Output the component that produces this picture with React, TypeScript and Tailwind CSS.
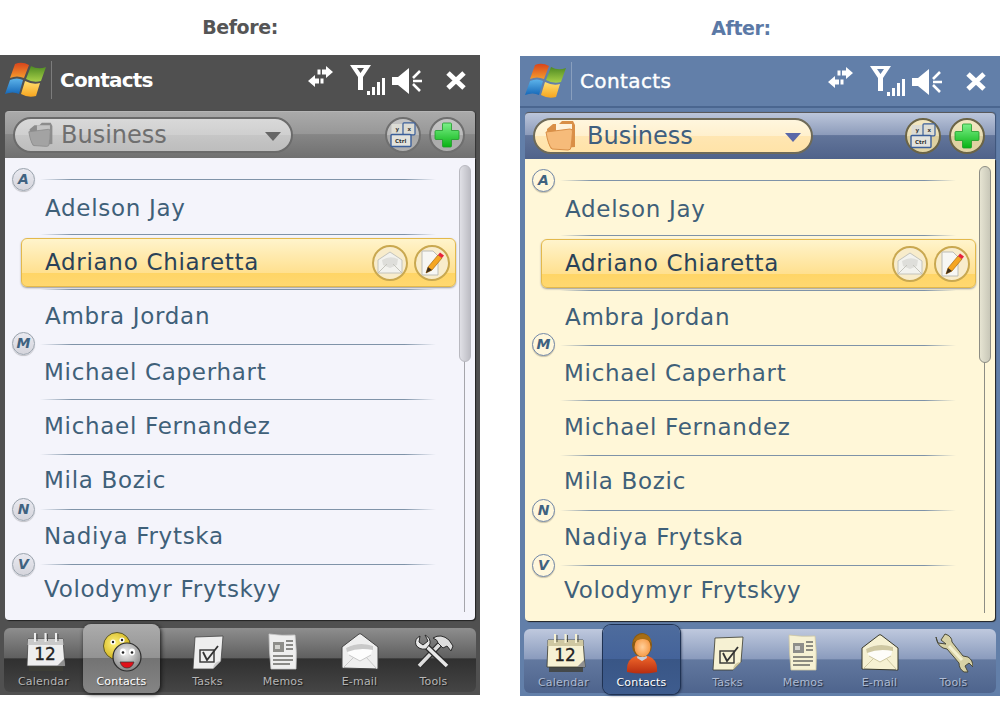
import type { ReactNode } from "react";

type Theme = {
  id: string;
  heading: string;
  frame: string;
  headerRule: string;
  titleClass: string;
  toolbar: string;
  pill: string;
  pillText: string;
  caret: string;
  roundButton: string;
  list: string;
  badge: string;
  thumb: string;
  track: string;
  tabBar: string;
  activeTab: string;
  tabText: string;
  folderWidth: number;
  folder: [string, string, string];
  paper: string;
  paperShade: string;
  ink: string;
};

const beforeTheme: Theme = {
  id: "before",
  heading: "text-[#555555]",
  frame: "bg-[#505050]",
  headerRule: "border-[#505050]",
  titleClass: "font-bold tracking-[-0.8px]",
  toolbar:
    "border-t border-[#b5b5b5] shadow-[1px_0_1px_#333] bg-[linear-gradient(180deg,#aaaaaa_0%,#979797_48%,#868686_49%,#707070_100%)]",
  pill: "border-[#6b6b6b] pl-[13px] bg-[linear-gradient(180deg,#d9d9d9_0%,#cfcfcf_50%,#c6c6c6_51%,#bdbdbd_100%)]",
  pillText: "ml-[7px] text-[#6f6f6f]",
  caret: "#666666",
  roundButton:
    "border-[#6f6f6f] bg-[linear-gradient(180deg,#c4c4c4_0%,#bcbcbc_50%,#a9a9a9_51%,#b0b0b0_100%)]",
  list: "bg-[#f4f4fb]",
  badge: "border-[#9aa3ad] bg-[linear-gradient(180deg,#e9e9f0,#d5d5dc)]",
  thumb: "border-[#b9b9c0] bg-[linear-gradient(90deg,#e0e0e6,#bdbdc4)]",
  track: "bg-[#a5a5ab]",
  tabBar:
    "bg-[linear-gradient(180deg,#8e8e8e_0%,#5f5f5f_47%,#303030_48%,#454545_100%)]",
  activeTab:
    "bg-[linear-gradient(180deg,#acacac_0%,#939393_49%,#737373_50%,#858585_100%)] shadow-[1px_1px_4px_#111]",
  tabText: "text-[#b5b5b5]",
  folderWidth: 26,
  folder: ["#8c8c8c", "#c4c4c4", "#a3a3a3"],
  paper: "#eeeeee",
  paperShade: "#c9c9c9",
  ink: "#444444",
};

const afterTheme: Theme = {
  id: "after",
  heading: "text-[#5b79a6]",
  frame: "bg-[#627fa9]",
  headerRule: "border-[#4a6690]",
  titleClass: "font-normal tracking-[0.4px] [-webkit-text-stroke:0.4px_white]",
  toolbar:
    "border-t border-[#59595b] shadow-[1px_0_1px_#3d5478] bg-[linear-gradient(180deg,#bcc6db_0%,#8c9bba_48%,#62759a_49%,#4f628a_100%)]",
  pill: "border-[#6e6a58] pl-[10px] bg-[linear-gradient(180deg,#fff6de_0%,#fff0cd_50%,#ffe6b2_51%,#ffe3a8_100%)]",
  pillText: "ml-[10px] text-[#3f5f7f]",
  caret: "#5a68a8",
  roundButton:
    "border-[#6b6446] bg-[linear-gradient(180deg,#f4e8c2_0%,#eadfb6_50%,#dccf9f_51%,#e2d5a6_100%)]",
  list: "bg-[#fff7d8]",
  badge: "border-[#7288a8] bg-[#fff7dc]",
  thumb: "border-[#8d8d84] bg-[linear-gradient(90deg,#e6e4d2,#c8c7b8)]",
  track: "bg-[#8d8d84]",
  tabBar:
    "bg-[linear-gradient(180deg,#bfc9de_0%,#8a9bbd_47%,#62789f_48%,#4e648d_100%)]",
  activeTab:
    "ring-1 ring-[#1f3253] bg-[linear-gradient(180deg,#4e6c9d_0%,#44639a_49%,#395686_50%,#3e5c8e_100%)] shadow-[1px_1px_3px_#1a2740]",
  tabText: "text-[#aebbd3]",
  folderWidth: 32,
  folder: ["#d98f47", "#fff3dc", "#f6bb7a"],
  paper: "#f6f1d3",
  paperShade: "#cfc8a2",
  ink: "#3a3a2c",
};

const contacts = [
  { name: "Adelson Jay", nudge: "pl-[40px] pt-[2px]" },
  { name: "Adriano Chiaretta", selected: true },
  { name: "Ambra Jordan", nudge: "pl-[40px] pb-[2px]", badge: "M", badgeClass: "-bottom-[10px]" },
  { name: "Michael Caperhart", nudge: "pl-[39px]" },
  { name: "Michael Fernandez", nudge: "pl-[39px] pb-[2px]" },
  { name: "Mila Bozic", nudge: "pl-[39px] pb-[3px]", badge: "N", badgeClass: "-bottom-[11px]" },
  { name: "Nadiya Frytska", nudge: "pl-[39px] pb-[2px]", badge: "V", badgeClass: "-bottom-[11px]" },
  { name: "Volodymyr Frytskyy", nudge: "pl-[39px] pb-[2px]", last: true },
];

function WindowsFlag({ id }: { id: string }) {
  return (
    <svg width="42" height="38" viewBox="0 0 42 38" className="shrink-0">
      <defs>
        <linearGradient id={`${id}-r`} x1="0" y1="0" x2="0" y2="1">
          <stop offset="0" stopColor="#d8441c" />
          <stop offset="1" stopColor="#f59b2c" />
        </linearGradient>
        <linearGradient id={`${id}-g`} x1="0" y1="0" x2="0" y2="1">
          <stop offset="0" stopColor="#4d8a22" />
          <stop offset="1" stopColor="#a8d048" />
        </linearGradient>
        <linearGradient id={`${id}-b`} x1="0" y1="0" x2="0" y2="1">
          <stop offset="0" stopColor="#5cb3ea" />
          <stop offset="1" stopColor="#1668b8" />
        </linearGradient>
        <linearGradient id={`${id}-y`} x1="0" y1="0" x2="0" y2="1">
          <stop offset="0" stopColor="#ffdf70" />
          <stop offset="1" stopColor="#f7a51f" />
        </linearGradient>
      </defs>
      <path d="M10 3 Q17 0 24 4 L19 17 Q12 14 5 17 Z" fill={`url(#${id}-r)`} />
      <path d="M26 5 Q33 9 41 6 L36 20 Q28 22 21 18 Z" fill={`url(#${id}-g)`} />
      <path d="M5 19 Q12 16 18 19 L14 33 Q8 30 0 33 Z" fill={`url(#${id}-b)`} />
      <path d="M20 20 Q28 24 35 22 L31 35 Q23 37 16 33 Z" fill={`url(#${id}-y)`} />
    </svg>
  );
}

function StatusIcons() {
  return (
    <div className="ml-auto flex items-center pr-[14px]">
      <svg width="25" height="22" viewBox="0 0 25 22" fill="white" className="mb-[8px]">
        <path d="M25 7 L18 1 V4.5 H14 V9.5 H18 V13 Z" />
        <rect x="9.5" y="4.5" width="3" height="5" />
        <path d="M0 16 L7 10 V13.5 H11 V18.5 H7 V22 Z" />
        <rect x="12.5" y="13.5" width="3" height="5" />
      </svg>
      <svg width="35" height="30" viewBox="0 0 35 30" fill="white" className="ml-[17px]">
        <path d="M0 0 H21 L13 12 V25 H8 V12 Z M7 3 L10.5 8 L14 3 Z" fillRule="evenodd" />
        <rect x="17" y="26" width="3" height="4" />
        <rect x="22" y="22" width="3" height="8" />
        <rect x="27" y="17" width="3" height="13" />
        <rect x="32" y="13" width="3" height="17" />
      </svg>
      <svg width="30" height="26" viewBox="0 0 30 26" className="ml-[7px] mt-[2px]">
        <path d="M0 9 H6 L17 0 V26 L6 17 H0 Z" fill="white" />
        <path d="M21 10 L28 3 M21 13 H30 M21 16 L28 23" stroke="white" strokeWidth="2.6" fill="none" />
      </svg>
      <svg width="20" height="19" viewBox="0 0 20 19" className="ml-[24px] mt-[1px]">
        <path d="M2 2 L18 17 M18 2 L2 17" stroke="white" strokeWidth="5" fill="none" />
      </svg>
    </div>
  );
}

function Folder({ width, colors }: { width: number; colors: [string, string, string] }) {
  return (
    <svg width={width} height={width} viewBox="0 0 32 32" className="shrink-0">
      <path d="M2 9 L8 4 H14 L17 1 H28 L30 5 V27 L6 29 Q2 22 2 9 Z" fill={colors[0]} />
      <path d="M11 4 H27 V22 H11 Z" fill={colors[1]} />
      <path d="M1 12 L25 9 Q28 9 27.5 12 L26 27 Q26 30 23 30 L7 29 Q3 25 1 12 Z" fill={colors[2]} stroke={colors[0]} strokeWidth="1" />
    </svg>
  );
}

function KeysIcon() {
  return (
    <svg width="27" height="27" viewBox="0 0 27 27">
      <rect x="1.5" y="2" width="11" height="10" fill="#dcdcd5" />
      <rect x="13" y="0.8" width="12" height="12" rx="1" fill="#dcdcd5" stroke="#3b5f9a" strokeWidth="1.2" />
      <rect x="1" y="12.5" width="20" height="12" rx="1" fill="#e3e3dd" stroke="#3b5f9a" strokeWidth="1.4" />
      <text x="5" y="21" fontSize="5.5" fontFamily="'DejaVu Sans', sans-serif" fontWeight="700" fill="#333">Ctrl</text>
      <text x="5.5" y="9" fontSize="5.5" fontFamily="'DejaVu Sans', sans-serif" fontWeight="700" fill="#333">y</text>
      <text x="17.5" y="9" fontSize="5.5" fontFamily="'DejaVu Sans', sans-serif" fontWeight="700" fill="#333">x</text>
    </svg>
  );
}

function PlusIcon({ id }: { id: string }) {
  return (
    <svg width="26" height="26" viewBox="0 0 26 26">
      <defs>
        <linearGradient id={`${id}-plus`} x1="0" y1="0" x2="0" y2="1">
          <stop offset="0" stopColor="#7cf08a" />
          <stop offset="1" stopColor="#09b313" />
        </linearGradient>
      </defs>
      <path
        d="M9.5 1 H16.5 Q17.5 1 17.5 2 V8.5 H24 Q25 8.5 25 9.5 V16.5 Q25 17.5 24 17.5 H17.5 V24 Q17.5 25 16.5 25 H9.5 Q8.5 25 8.5 24 V17.5 H2 Q1 17.5 1 16.5 V9.5 Q1 8.5 2 8.5 H8.5 V2 Q8.5 1 9.5 1 Z"
        fill={`url(#${id}-plus)`}
        stroke="#1f9a2a"
        strokeWidth="0.8"
      />
    </svg>
  );
}

function RoundButton({ className, children }: { className: string; children: ReactNode }) {
  return (
    <div className={`flex h-[36px] w-[36px] shrink-0 items-center justify-center rounded-full border-2 ${className}`}>
      {children}
    </div>
  );
}

function MailSmall() {
  return (
    <svg width="26" height="24" viewBox="0 0 26 24">
      <path d="M1 9 L13 1 L25 9 V22 H1 Z" fill="#f2f2ee" stroke="#c4c4bc" />
      <path d="M5 9 Q13 4 21 8 L20 14 L13 17 L6 14 Z" fill="#dededa" />
      <path d="M1 22 L10 13 M25 22 L16 13" stroke="#c4c4bc" fill="none" />
    </svg>
  );
}

function PencilPage() {
  return (
    <svg width="24" height="26" viewBox="0 0 24 26">
      <path d="M2 1 H13 L18 6 V25 H2 Z" fill="#f7f7f4" stroke="#bdbdb6" />
      <path d="M6 23 L8 17 L18 5 L22 8 L12 20 Z" fill="#f5a623" stroke="#a96a10" strokeWidth="0.7" />
      <path d="M18 5 L20 2.5 L24 5.5 L22 8 Z" fill="#e8233c" />
      <path d="M6 23 L8 17 L12 20 Z" fill="#3a2c1c" />
    </svg>
  );
}

function CalendarIcon({ theme }: { theme: Theme }) {
  return (
    <svg width="40" height="40" viewBox="0 0 40 40" className="ml-[4px]">
      <rect x="3" y="33" width="34" height="6" fill="#3f3f36" opacity="0.8" />
      <path d="M2 7 H37 L39 34 H1 Z" fill={theme.paper} stroke={theme.ink} strokeWidth="0.8" />
      <path d="M2 7 H37 L37.5 13 H1.6 Z" fill={theme.paperShade} />
      <path d="M9 1 V10 M19.5 1 V10 M30 1 V10" stroke={theme.paper} strokeWidth="2" fill="none" />
      <path d="M11 2 V9 M21.5 2 V9 M32 2 V9" stroke={theme.ink} strokeWidth="0.8" fill="none" />
      <path d="M31 34 L38 27 L39 34 Z" fill="#8f8f8f" />
      <text x="19" y="28" textAnchor="middle" fontSize="17" fontWeight="400" fontFamily="'DejaVu Sans', sans-serif" fill="#222" stroke="#222" strokeWidth="0.3">
        12
      </text>
    </svg>
  );
}

function SmileysIcon({ id }: { id: string }) {
  return (
    <svg width="40" height="40" viewBox="0 0 40 40">
      <defs>
        <radialGradient id={`${id}-smile-y`} cx="0.4" cy="0.4" r="0.7">
          <stop offset="0" stopColor="#fff27a" />
          <stop offset="1" stopColor="#c9a80f" />
        </radialGradient>
        <radialGradient id={`${id}-smile-g`} cx="0.45" cy="0.35" r="0.7">
          <stop offset="0" stopColor="#f1f1f1" />
          <stop offset="1" stopColor="#7d7d7d" />
        </radialGradient>
      </defs>
      <circle cx="15" cy="14" r="13.5" fill={`url(#${id}-smile-y)`} stroke="#3d3d1a" strokeWidth="0.8" />
      <circle cx="11" cy="10" r="2.6" fill="white" />
      <circle cx="20" cy="8" r="2.6" fill="white" />
      <circle cx="11" cy="10" r="1.2" fill="#222" />
      <circle cx="20" cy="8" r="1.2" fill="#222" />
      <circle cx="25" cy="25" r="14" fill={`url(#${id}-smile-g)`} stroke="#2c2c2c" strokeWidth="1.2" />
      <ellipse cx="21" cy="20" rx="3" ry="3.4" fill="white" />
      <ellipse cx="30" cy="20" rx="3" ry="3.4" fill="white" />
      <circle cx="21" cy="20.5" r="1.3" fill="#222" />
      <circle cx="30" cy="20.5" r="1.3" fill="#222" />
      <path d="M18 30 H32 Q30 36 25 36 Q20 36 18 30 Z" fill="#e0101a" stroke="#333" strokeWidth="0.7" />
    </svg>
  );
}

function PersonIcon({ id }: { id: string }) {
  return (
    <svg width="32" height="42" viewBox="0 0 32 42">
      <defs>
        <linearGradient id={`${id}-shirt`} x1="0" y1="0" x2="0" y2="1">
          <stop offset="0" stopColor="#f0672a" />
          <stop offset="1" stopColor="#b72d10" />
        </linearGradient>
        <radialGradient id={`${id}-face`} cx="0.5" cy="0.5" r="0.6">
          <stop offset="0" stopColor="#ffcf9a" />
          <stop offset="1" stopColor="#f59036" />
        </radialGradient>
      </defs>
      <path d="M1 40 Q0 27 10 24 L22 24 Q32 27 31 40 Q16 43 1 40 Z" fill={`url(#${id}-shirt)`} />
      <path d="M12 22 H20 L21 26 L16 29 L11 26 Z" fill="#c9d0dc" />
      <ellipse cx="16" cy="13" rx="10" ry="12" fill="#8a5a12" />
      <ellipse cx="16.5" cy="15" rx="8" ry="10" fill={`url(#${id}-face)`} />
      <path d="M7 10 Q10 2 17 2 Q25 3 25.5 11 Q19 5 12 8 Z" fill="#a76d14" />
    </svg>
  );
}

function TasksIcon({ theme }: { theme: Theme }) {
  return (
    <svg width="32" height="36" viewBox="0 0 32 36" className="mt-[2px]">
      <path d="M3 2 L31 1 L29 26 L21 34 L1 34 Z" fill={theme.paper} stroke={theme.ink} strokeWidth="0.8" />
      <path d="M29 26 Q22 26 21 34 Z" fill={theme.paperShade} />
      <rect x="8" y="15" width="14" height="12" fill="none" stroke="#333" strokeWidth="1.4" />
      <path d="M11 17 L15 25 L26 11" fill="none" stroke="#333" strokeWidth="1.8" />
    </svg>
  );
}

function MemosIcon({ theme }: { theme: Theme }) {
  return (
    <svg width="30" height="38" viewBox="0 0 30 38">
      <path d="M1 1 Q14 3 27 2 Q29 18 28 36 L3 36 Q1 18 1 1 Z" fill={theme.paper} stroke={theme.paperShade} strokeWidth="0.8" />
      <rect x="5" y="9" width="11" height="10" fill="#8e8e8a" />
      <rect x="7" y="12" width="5" height="4" fill="#d4d4d0" />
      <path d="M18 8 H25 M18 12 H25 M18 16 H25 M5 23 H25 M5 27 H25 M5 31 H22" stroke="#6a6a66" strokeWidth="1.4" fill="none" />
    </svg>
  );
}

function MailIcon({ theme }: { theme: Theme }) {
  return (
    <svg width="38" height="38" viewBox="0 0 38 38">
      <path d="M1 14 L18 1 Q19 0.5 20 1 L37 14 L37 36 L1 35 Z" fill={theme.paper} stroke={theme.ink} strokeWidth="1" />
      <path d="M5 15 Q18 8 32 13 L30 22 L19 28 L8 22 Z" fill="#ffffff" opacity="0.85" />
      <path d="M5 15 Q18 8 32 13 L32 17 Q18 14 6 19 Z" fill={theme.paperShade} />
      <path d="M2 35 L13 24 M36 36 L25 24 M8 22 L19 28 L30 22" fill="none" stroke={theme.paperShade} strokeWidth="1" />
    </svg>
  );
}

function CrossedToolsIcon() {
  return (
    <svg width="40" height="36" viewBox="0 0 40 36">
      <path d="M5 32 L27 9" stroke="#2c2c2c" strokeWidth="6" fill="none" />
      <path d="M5 32 L27 9" stroke="#dedede" strokeWidth="3.6" fill="none" />
      <path d="M19 4 Q27 -1 35 6 L39 12 L37 17 L33 12 L29 14 L24 9 Q24 6 19 4 Z" fill="#dedede" stroke="#2c2c2c" />
      <path d="M33 32 L11 11" stroke="#2c2c2c" strokeWidth="6" fill="none" />
      <path d="M33 32 L11 11" stroke="#e8e8e8" strokeWidth="3.6" fill="none" />
      <path d="M6 2 L5 8 L9 11 L14 7 L11 1 Q17 4 16 10 L12 15 Q5 16 2 11 Q0 5 6 2 Z" fill="#e8e8e8" stroke="#2c2c2c" />
    </svg>
  );
}

function WrenchIcon() {
  return (
    <svg width="38" height="40" viewBox="0 0 38 40">
      <path
        d="M10 1 L6 7 L11 11 L3 10 L1 4 Q2 12 8 15 L12 16 L24 30 Q24 36 29 39 L33 39 L30 33 L34 30 L38 34 Q38 27 33 24 L28 23 L17 9 Q17 3 10 1 Z"
        fill="#d8d2a6"
        stroke="#4a4a3a"
        strokeWidth="1"
      />
      <path d="M14 13 L27 27" stroke="#f3efcf" strokeWidth="3" fill="none" />
    </svg>
  );
}

function Tab({
  theme,
  label,
  active,
  width,
  children,
}: {
  theme: Theme;
  label: string;
  active?: boolean;
  width: string;
  children: ReactNode;
}) {
  return (
    <div
      className={`flex shrink-0 flex-col items-center ${width} ${
        active ? `-mb-[1px] -mt-[4px] rounded-lg pt-[5px] ${theme.activeTab}` : "pt-[1px]"
      }`}
    >
      <div className="flex h-[46px] items-center justify-center">{children}</div>
      <span
        className={`text-[11px] leading-[14px] tracking-[0.2px] [text-shadow:1px_1px_1px_rgba(0,0,0,0.6)] ${
          active ? "text-white" : theme.tabText
        }`}
      >
        {label}
      </span>
    </div>
  );
}

function Divider() {
  return (
    <div className="ml-[35px] mr-[39px] h-px shrink-0 bg-[linear-gradient(90deg,transparent,#7f93a8_8%,#7f93a8_92%,transparent)]" />
  );
}

function LetterBadge({ letter, theme, className }: { letter: string; theme: Theme; className: string }) {
  return (
    <span
      className={`absolute left-[7px] flex h-[23px] w-[23px] items-center justify-center rounded-full border-[1.5px] text-[14px] font-bold italic text-[#3f6280] shadow-[0_1px_1px_rgba(0,0,0,0.2)] ${theme.badge} ${className}`}
    >
      {letter}
    </span>
  );
}

function Phone({ theme }: { theme: Theme }) {
  return (
    <div className={`flex h-[640px] w-[480px] flex-col ${theme.frame}`}>
      <header className={`flex h-[52px] shrink-0 items-center border-b-2 pl-[5px] ${theme.headerRule}`}>
        <WindowsFlag id={theme.id} />
        <div className="ml-[4px] h-[38px] w-px bg-white/25" />
        <h2 className={`ml-[8px] text-[20px] text-white ${theme.titleClass}`}>Contacts</h2>
        <StatusIcons />
      </header>

      <div className={`mx-[5px] mt-[4px] flex h-[47px] shrink-0 items-center rounded-t-sm pl-[8px] pr-[10px] ${theme.toolbar}`}>
        <div className={`flex h-[36px] w-[280px] items-center rounded-full border-2 pr-[10px] ${theme.pill}`}>
          <Folder width={theme.folderWidth} colors={theme.folder} />
          <span className={`text-[24px] leading-none ${theme.pillText}`}>Business</span>
          <svg width="16" height="9" viewBox="0 0 16 9" className="ml-auto mt-[2px]">
            <path d="M0 0 H16 L8 9 Z" fill={theme.caret} />
          </svg>
        </div>
        <RoundButton className={`ml-auto ${theme.roundButton}`}>
          <KeysIcon />
        </RoundButton>
        <RoundButton className={`ml-[8px] ${theme.roundButton}`}>
          <PlusIcon id={theme.id} />
        </RoundButton>
      </div>

      <div className={`relative mx-[5px] flex h-[462px] shrink-0 flex-col rounded-b-sm shadow-[1px_1px_1px_#222] ${theme.list}`}>
        <div className="h-[21px] shrink-0" />
        <Divider />
        <LetterBadge letter="A" theme={theme} className="top-[10px]" />
        {contacts.map((contact) => (
          <div key={contact.name} className={`relative flex flex-col ${contact.last ? "flex-1" : "h-[55px]"}`}>
            {contact.selected ? (
              <div className="ml-[16px] mt-[3px] flex h-[49px] w-[435px] items-center rounded-md border border-[#e3b94c] bg-[linear-gradient(180deg,#fff4cc_0%,#ffe08f_72%,#ffd566_73%,#ffd870_100%)] pl-[23px] pr-[5px] shadow-[0_1px_2px_#9a9a9a]">
                <span className="text-[23px] tracking-[0.7px] text-[#2a4258]">{contact.name}</span>
                <RoundButton className="ml-auto border-[#c9a850] bg-[#f8eccb]">
                  <MailSmall />
                </RoundButton>
                <RoundButton className="ml-[6px] border-[#c9a850] bg-[#f8eccb]">
                  <PencilPage />
                </RoundButton>
              </div>
            ) : (
              <div className={`flex items-center ${contact.nudge} ${contact.last ? "h-[50px]" : "flex-1"}`}>
                <span className="text-[23px] tracking-[0.7px] text-[#3f6079]">{contact.name}</span>
              </div>
            )}
            {contact.selected && <div className="h-[2px]" />}
            {!contact.last && <div className="mt-auto"><Divider /></div>}
            {contact.badge && <LetterBadge letter={contact.badge} theme={theme} className={contact.badgeClass ?? ""} />}
          </div>
        ))}
        <div className={`absolute bottom-[8px] right-[10px] top-[8px] w-px ${theme.track}`} />
        <div className={`absolute right-[4px] top-[7px] h-[197px] w-[12px] rounded-full border ${theme.thumb}`} />
      </div>

      <nav className={`mx-[4px] mt-[8px] flex h-[64px] shrink-0 rounded-md ${theme.tabBar}`}>
        <Tab theme={theme} label="Calendar" width="w-[79px]">
          <CalendarIcon theme={theme} />
        </Tab>
        <Tab theme={theme} label="Contacts" width="w-[77px]" active>
          {theme.id === "before" ? <SmileysIcon id={theme.id} /> : <PersonIcon id={theme.id} />}
        </Tab>
        <div className="w-[10px] shrink-0" />
        <Tab theme={theme} label="Tasks" width="w-[75px]">
          <TasksIcon theme={theme} />
        </Tab>
        <Tab theme={theme} label="Memos" width="w-[76px]">
          <MemosIcon theme={theme} />
        </Tab>
        <Tab theme={theme} label="E-mail" width="w-[77px]">
          <MailIcon theme={theme} />
        </Tab>
        <Tab theme={theme} label="Tools" width="w-[71px]">
          {theme.id === "before" ? <CrossedToolsIcon /> : <WrenchIcon />}
        </Tab>
      </nav>
    </div>
  );
}

export default function App() {
  return (
    <main className="flex h-[702px] w-[1000px] justify-between overflow-hidden bg-white font-['DejaVu_Sans',sans-serif]">
      <section>
        <h1 className={`flex h-[55px] items-center justify-center text-[19px] font-bold tracking-[-0.4px] ${beforeTheme.heading}`}>
          Before:
        </h1>
        <Phone theme={beforeTheme} />
      </section>
      <section>
        <h1 className={`flex h-[56px] items-center justify-center pr-[38px] text-[19px] font-bold tracking-[-0.4px] ${afterTheme.heading}`}>
          After:
        </h1>
        <Phone theme={afterTheme} />
      </section>
    </main>
  );
}
